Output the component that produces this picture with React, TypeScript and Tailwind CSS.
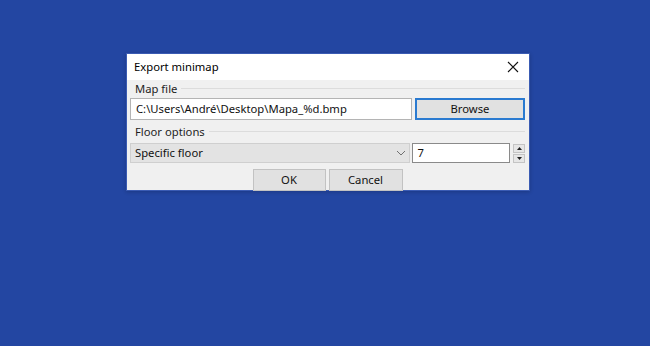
import React from "react";

const font = { fontFamily: '"Segoe UI", "Noto Sans", "Open Sans", sans-serif' };

const GroupHeader = ({ label }: { label: string }) => (
    <div className="flex items-center h-[15px] pl-[8px] pr-[4px] gap-[4px]">
        <span className="text-[11.25px] leading-[15px] text-[#1e1e1e]">{label}</span>
        <div className="flex-1 h-px bg-[#dcdcdc]" />
    </div>
);

export default function App() {
    return (
        <div className="w-[650px] h-[346px] bg-[#2346a2] pt-[53px] pl-[126px]" style={font}>
            <div className="w-[404px] h-[138px] border border-[#3a5bb3] bg-[#f0f0f0] flex flex-col shadow-[0_1px_4px_rgba(0,0,0,0.2)]">
                {/* title bar */}
                <div className="h-[26px] bg-white flex items-center justify-between pl-[7px] pr-[8px] shrink-0">
                    <span className="text-[11.25px] text-black">Export minimap</span>
                    <svg width="12" height="12" viewBox="0 0 12 12" className="mr-[2px]">
                        <path d="M1 1 L11 11 M11 1 L1 11" stroke="#111" strokeWidth="1.1" />
                    </svg>
                </div>

                <div className="pt-[1px]">
                    <GroupHeader label="Map file" />
                    <div className="flex items-center gap-[3px] pl-[3px] pr-[4px] mt-[2px]">
                        <div className="w-[282px] h-[22px] bg-white border border-[#b4b4b4] flex items-center pl-[5px] text-[11.25px] text-[#111]">
                            C:\Users\André\Desktop\Mapa_%d.bmp
                        </div>
                        <div className="flex-1 h-[22px] bg-[#e1e1e1] border-2 border-[#2a7ad0] flex items-center justify-center text-[11.25px] text-[#111]">
                            Browse
                        </div>
                    </div>
                </div>

                <div className="mt-[4px]">
                    <GroupHeader label="Floor options" />
                    <div className="flex items-center pl-[3px] pr-[4px] mt-[4px]">
                        <div className="w-[281px] h-[20px] bg-[#e3e3e3] border border-[#cfcfcf] flex items-center justify-between pl-[4px] pr-[3px] text-[11.25px] text-[#111]">
                            <span>Specific floor</span>
                            <svg width="10" height="6" viewBox="0 0 10 6">
                                <path d="M1 1 L5 5 L9 1" fill="none" stroke="#707070" strokeWidth="1" />
                            </svg>
                        </div>
                        <div className="ml-[2px] w-[99px] h-[20px] bg-white border border-[#8a8a8a] flex items-center pl-[5px] text-[11.25px] text-[#111]">
                            7
                        </div>
                        <div className="ml-[3px] w-[12px] h-[19px] flex flex-col gap-px">
                            <div className="flex-1 bg-[#e6e6e6] border border-[#c4c4c4] flex items-center justify-center">
                                <svg width="5" height="3" viewBox="0 0 5 3"><path d="M0 3 L2.5 0 L5 3 Z" fill="#222" /></svg>
                            </div>
                            <div className="flex-1 bg-[#e6e6e6] border border-[#c4c4c4] flex items-center justify-center">
                                <svg width="5" height="3" viewBox="0 0 5 3"><path d="M0 0 L2.5 3 L5 0 Z" fill="#222" /></svg>
                            </div>
                        </div>
                    </div>
                </div>

                <div className="flex justify-center gap-[3px] mt-[6px] pr-[1px]">
                    <div className="w-[73px] h-[22px] bg-[#e1e1e1] border border-[#c2c2c2] flex items-center justify-center text-[11.25px] text-[#111]">
                        OK
                    </div>
                    <div className="w-[74px] h-[22px] bg-[#e1e1e1] border border-[#c2c2c2] flex items-center justify-center text-[11.25px] text-[#111]">
                        Cancel
                    </div>
                </div>
            </div>
        </div>
    );
}
